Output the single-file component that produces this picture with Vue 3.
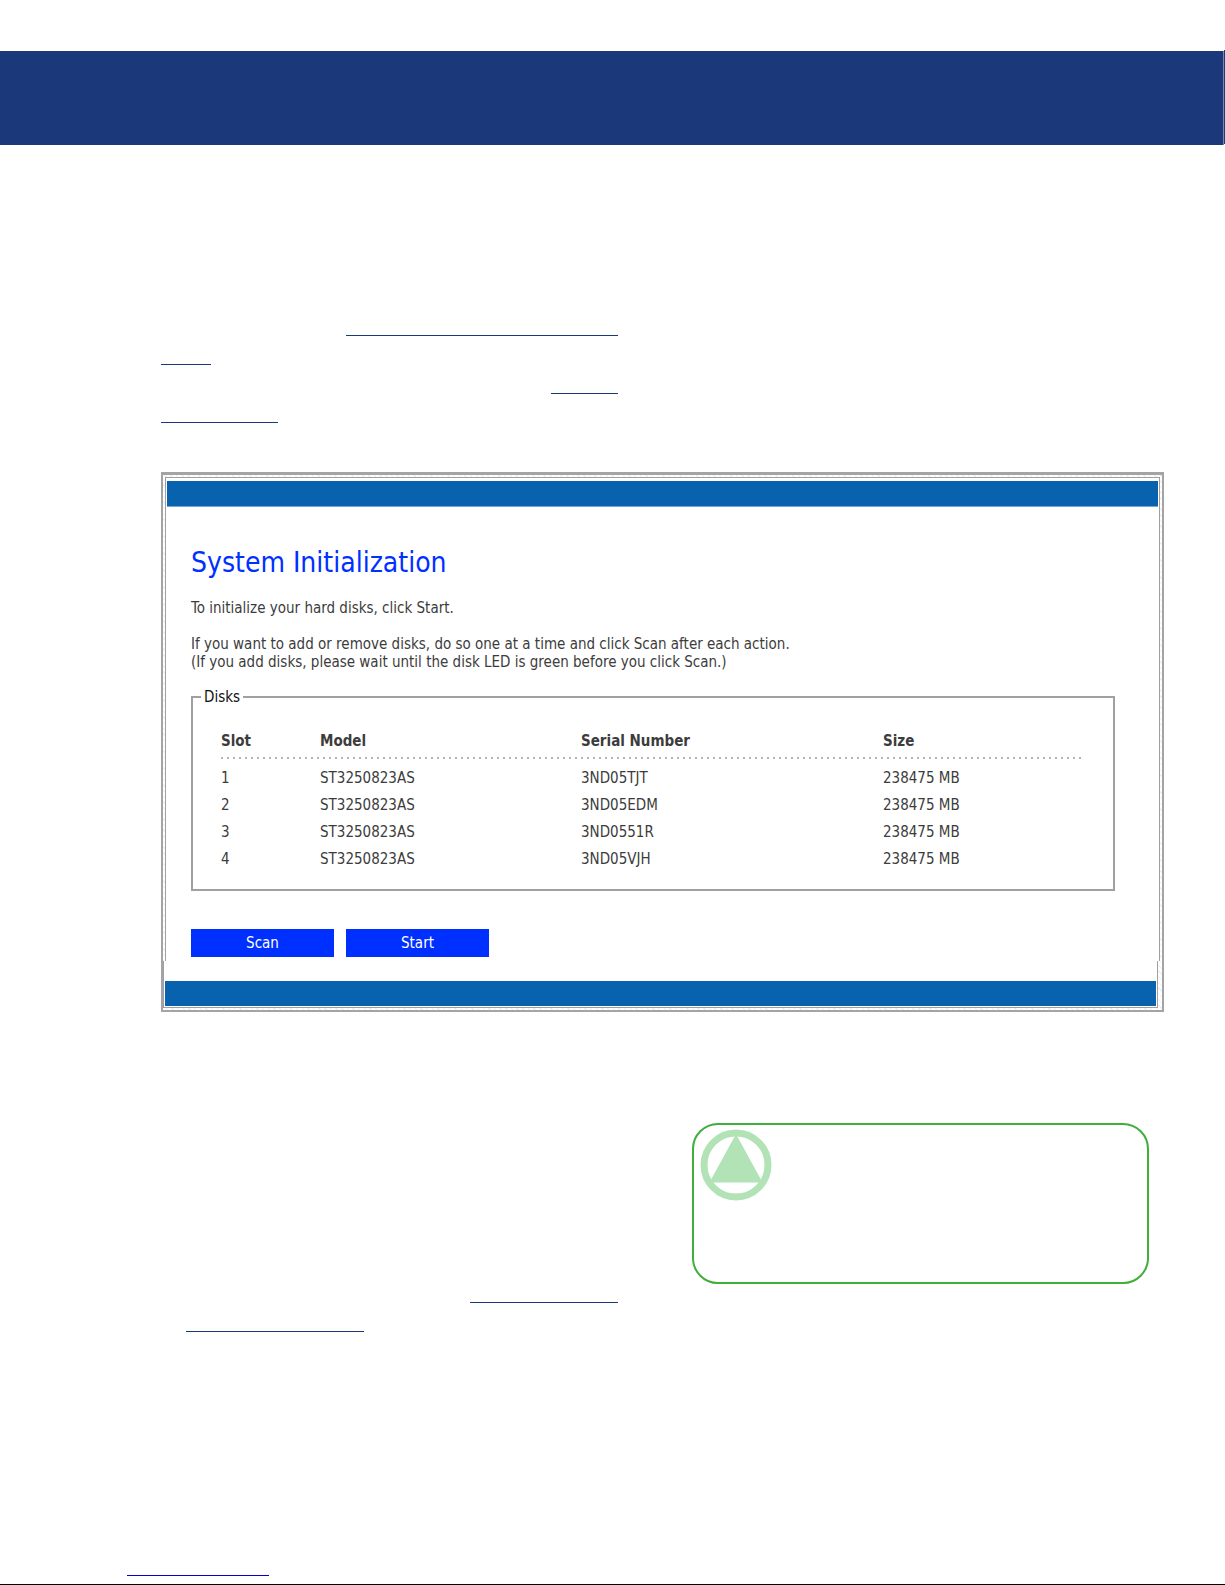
<script setup>
const columns = ['Slot', 'Model', 'Serial Number', 'Size']
const disks = [
  { slot: 1, model: 'ST3250823AS', serial: '3ND05TJT', size: '238475 MB' },
  { slot: 2, model: 'ST3250823AS', serial: '3ND05EDM', size: '238475 MB' },
  { slot: 3, model: 'ST3250823AS', serial: '3ND0551R', size: '238475 MB' },
  { slot: 4, model: 'ST3250823AS', serial: '3ND05VJH', size: '238475 MB' }
]
</script>

<template>
  <div class="page">
    <header class="banner">
      <div class="banner-fill"></div>
      <div class="banner-edge"></div>
    </header>

    <main class="content">
      <div class="columns">
        <div class="lines">
          <div class="line end"><a class="rule w272" href="#setup" aria-label="Setup"></a></div>
          <div class="line"><a class="rule w50" href="#setup" aria-label="Setup"></a></div>
          <div class="line end"><a class="rule w67" href="#details" aria-label="Details"></a></div>
          <div class="line"><a class="rule w117" href="#details" aria-label="Details"></a></div>
        </div>
      </div>

      <section class="frame">
        <div class="frame-upper">
          <div class="bar"></div>
          <div class="body">
            <h1>System Initialization</h1>
            <p>To initialize your hard disks, click Start.</p>
            <p>
              If you want to add or remove disks, do so one at a time and click Scan after each action.<br />
              (If you add disks, please wait until the disk LED is green before you click Scan.)
            </p>
            <fieldset>
              <legend>Disks</legend>
              <table>
                <colgroup>
                  <col class="c-slot" />
                  <col class="c-model" />
                  <col class="c-serial" />
                  <col />
                </colgroup>
                <thead>
                  <tr>
                    <th v-for="c in columns" :key="c" scope="col">{{ c }}</th>
                  </tr>
                </thead>
                <tbody>
                  <tr v-for="d in disks" :key="d.slot">
                    <td>{{ d.slot }}</td>
                    <td>{{ d.model }}</td>
                    <td>{{ d.serial }}</td>
                    <td>{{ d.size }}</td>
                  </tr>
                </tbody>
              </table>
            </fieldset>
            <div class="actions">
              <button type="button">Scan</button>
              <button type="button">Start</button>
            </div>
          </div>
        </div>
        <div class="frame-lower">
          <div class="bar"></div>
        </div>
      </section>

      <div class="columns notes">
        <div class="lines bottom">
          <div class="line end"><a class="rule w148" href="#next" aria-label="Next"></a></div>
          <div class="line indent"><a class="rule w178" href="#next" aria-label="Next"></a></div>
        </div>
        <aside class="callout">
          <svg width="72" height="72" viewBox="0 0 72 72" aria-hidden="true">
            <circle cx="36" cy="36" r="32" fill="none" stroke="#b2e3b6" stroke-width="7" />
            <path d="M36 5 L62.5 53.5 H9.5 Z" fill="#b2e3b6" />
          </svg>
        </aside>
      </div>
    </main>

    <footer class="footer">
      <a class="rule web w142" href="#web" aria-label="Web site"></a>
    </footer>
  </div>
</template>

<style>
body {
  margin: 0;
  background: #fff;
}
</style>

<style scoped>
.page {
  box-sizing: border-box;
  padding-top: 51px;
  border-bottom: 1px solid #000;
  font-family: "DejaVu Sans Condensed", "DejaVu Sans", sans-serif;
  font-stretch: condensed;
  font-size: 15px;
  line-height: 18px;
  color: #3c3c3c;
}
.banner {
  display: flex;
  height: 94px;
}
.banner-fill {
  flex: 1;
  background: #1b387a;
  border-right: 1px solid #7688b0;
}
.banner-edge {
  width: 1px;
  margin: -1px 0 1px;
  background: #1b387a;
}
.content {
  padding: 162px 61px 0 161px;
}
.columns {
  display: grid;
  grid-template-columns: 1fr 1fr;
  column-gap: 74px;
  padding-right: 15px;
}
.line {
  display: flex;
  align-items: flex-end;
  height: 29px;
}
.end {
  justify-content: flex-end;
}
.indent {
  padding-left: 25px;
}
.rule {
  display: block;
  border-bottom: 1px solid #1b387a;
}
.w50 { width: 50px; }
.w67 { width: 67px; }
.w117 { width: 117px; }
.w142 { width: 142px; }
.w148 { width: 148px; }
.w178 { width: 178px; }
.w272 { width: 272px; }

.frame {
  margin-top: 49px;
  border: 2px solid #a5a3a5;
  border-top-width: 3px;
  padding: 2px 0;
  background: repeating-linear-gradient(45deg, #fff 0 3px, #efefef 3px 4px);
}
.frame-upper {
  margin: 0 2px;
  border: solid #a0a0a0;
  border-width: 1px 1px 0;
  padding: 3px 1px 0;
  background: #fff;
}
.frame-lower {
  margin: 0 4px 0 0;
  border: solid #a0a0a0;
  border-width: 0 1px 1px;
  padding: 20px 1px 1px;
  background: #fff;
}
.bar {
  height: 25px;
  background: #0862ad;
  border-bottom: 1px solid #78a8d2;
}
.frame-lower .bar {
  border-bottom: 0;
}
.body {
  padding: 38px 43px 4px 24px;
}
h1 {
  margin: 0 0 18px;
  font-size: 28px;
  line-height: 36px;
  font-weight: 400;
  color: #0030ff;
}
p {
  margin: 0 0 18px;
}
fieldset {
  min-width: 0;
  margin: 0;
  padding: 25px 30px 17px 28px;
  border: 2px solid #a0a0a0;
}
legend {
  margin-left: -20px;
  padding: 0 3px;
  line-height: 16px;
  color: #111;
}
table {
  width: 100%;
  border-collapse: collapse;
  table-layout: fixed;
}
.c-slot { width: 99px; }
.c-model { width: 261px; }
.c-serial { width: 302px; }
th,
td {
  padding: 0;
  height: 27px;
  text-align: left;
}
thead tr {
  background: repeating-linear-gradient(90deg, #b4b4b4 0 2px, #fff 2px 6px) left bottom 5px / 100% 2px no-repeat;
}
th {
  height: 34px;
  padding-bottom: 14px;
  box-sizing: border-box;
  vertical-align: bottom;
}
.actions {
  display: flex;
  gap: 12px;
  margin-top: 38px;
}
button {
  width: 143px;
  height: 28px;
  padding: 0;
  border: 0;
  background: #0030ff;
  color: #fff;
  font: inherit;
}
.notes {
  margin-top: 111px;
}
.bottom {
  display: flex;
  flex-direction: column;
  justify-content: flex-end;
  min-height: 209px;
}
.callout {
  box-sizing: border-box;
  align-self: start;
  min-height: 161px;
  padding: 4px 6px;
  border: 2px solid #3fae3a;
  border-radius: 26px;
}
.callout svg {
  display: block;
}
.footer {
  display: flex;
  align-items: flex-end;
  height: 244px;
  padding: 0 127px 8px;
  box-sizing: content-box;
}
.web {
  border-color: #0000d8;
}
</style>
